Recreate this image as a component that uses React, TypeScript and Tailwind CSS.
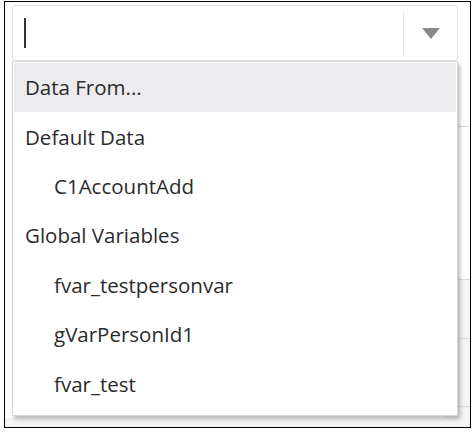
import React from "react";

const items: { label: string; indent: boolean; active?: boolean }[] = [
  { label: "Data From...", indent: false, active: true },
  { label: "Default Data", indent: false },
  { label: "C1AccountAdd", indent: true },
  { label: "Global Variables", indent: false },
  { label: "fvar_testpersonvar", indent: true },
  { label: "gVarPersonId1", indent: true },
  { label: "fvar_test", indent: true },
];

export default function App() {
  return (
    <div
      className="w-[476px] h-[435px] bg-white pt-[1px] pl-[4px]"
      style={{ fontFamily: '"Open Sans", "Noto Sans", sans-serif' }}
    >
      <div className="relative w-[467px] h-[427px] border border-black bg-white overflow-hidden">
        {/* background table rows behind the dropdown */}
        <div className="absolute left-[440px] right-0 top-[124px] bottom-0 bg-[#f4f4f5]">
          <div className="h-[153px] border-t border-[#dcdcdc] bg-white" />
          <div className="h-[59px] border-t border-[#dcdcdc]" />
          <div className="h-[68px] border-t border-[#dcdcdc]" />
          <div className="border-t border-[#dcdcdc]" />
        </div>
        <div className="absolute left-0 right-0 top-[416px] bottom-0 bg-[#f4f4f5]" />

        <div className="relative pt-[3px] pl-[7px] w-[453px]">
          {/* input */}
          <div className="h-[56px] border border-[#e2e2e2] rounded-[4px] bg-white flex items-center">
            <div className="flex-1 pl-[11px] flex items-center">
              <div className="w-[2px] h-[30px] bg-[#333333]" />
            </div>
            <div className="w-px h-[41px] bg-[#e2e2e2]" />
            <div className="w-[53px] flex items-center justify-center">
              <svg width="18" height="11" viewBox="0 0 18 11">
                <polygon points="0,0 18,0 9,11" fill="#8a8a8a" />
              </svg>
            </div>
          </div>

          {/* dropdown */}
          <div className="h-[355px] bg-white border border-[#d6d6d6] p-[1px] shadow-[2px_3px_4px_rgba(0,0,0,0.28)]">
            {items.map((it) => (
              <div
                key={it.label}
                className={`h-[49.4px] flex items-center text-[20.5px] text-[#2b2b2b] ${
                  it.indent ? "pl-[40px]" : "pl-[11px]"
                } ${it.active ? "bg-[#ececee]" : ""}`}
              >
                {it.label}
              </div>
            ))}
          </div>
        </div>
      </div>
    </div>
  );
}
